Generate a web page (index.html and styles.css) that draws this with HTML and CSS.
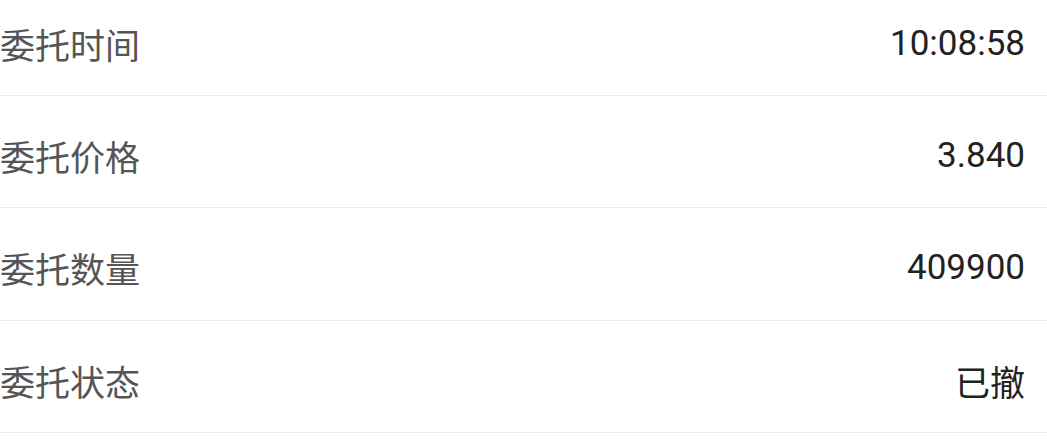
FILE: index.html
```html
<!DOCTYPE html>
<html>
<head>
  <title>委托详情</title>
  <link rel="stylesheet" href="styles.css">
</head>
<body>
  <!-- Order detail rows -->
  <div class="detail-list">
    <div class="detail-row">
      <span class="label">委托时间</span>
      <span class="value">10:08:58</span>
    </div>
    <div class="detail-row">
      <span class="label">委托价格</span>
      <span class="value">3.840</span>
    </div>
    <div class="detail-row">
      <span class="label">委托数量</span>
      <span class="value">409900</span>
    </div>
    <div class="detail-row">
      <span class="label">委托状态</span>
      <span class="value">已撤</span>
    </div>
  </div>
</body>
</html>
```

FILE: styles.css
```css
body {
  margin: 0;
  background-color: #fff;
  font-family: Roboto, "Noto Sans CJK SC", sans-serif;
}

.detail-list {
  margin-top: -16.33px;
}

.detail-row {
  display: flex;
  justify-content: space-between;
  align-items: center;
  height: 112.33px;
  padding: 8px 22px 0 0;
  box-sizing: border-box;
  border-bottom: 1px solid #ebebeb;
  font-size: 35px;
}

.detail-row .label {
  color: #555;
}

.detail-row .value {
  color: #222;
}
```
